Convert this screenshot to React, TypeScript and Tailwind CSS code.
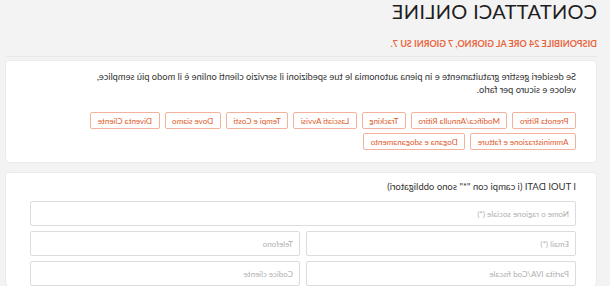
import React from 'react';

const LINKS_ROW = [
  'Prenota Ritiro',
  'Modifica/Annulla Ritiro',
  'Tracking',
  'Lasciati Avvisi',
  'Tempi e Costi',
  'Dove siamo',
  'Diventa Cliente',
  'Amministrazione e fatture',
  'Dogana e sdoganamento',
];

const Field = ({ placeholder }: { placeholder: string }) => (
  <input
    type="text"
    placeholder={placeholder}
    className="h-[25px] w-full rounded-[2px] border border-[#dcdcdc] bg-white px-[6px] text-[8px] text-[#555] outline-none placeholder:text-[#b0b0b0]"
  />
);

export default function App() {
  return (
    // the reference is a mirrored capture, so the whole page is flipped
    <div
      className="h-[286px] w-[610px] -scale-x-100 overflow-hidden bg-[#f3f3f3] text-[#333]"
      style={{ fontFamily: 'Lato, "Open Sans", sans-serif' }}
    >
      <div className="pl-[13px] pr-[5px]">
        <h1 className="pt-[1px] text-[20px] font-normal leading-none tracking-[0.3px] text-[#1e1e1e]">
          CONTATTACI ONLINE
        </h1>
        <p className="mt-[18px] text-[9px] font-bold leading-[9px] text-[#e8663d]">
          DISPONIBILE 24 ORE AL GIORNO, 7 GIORNI SU 7.
        </p>
        <div className="mt-[8px] border-t border-[#e9e9e9]" />

        {/* Servizi */}
        <div className="mt-[3px] rounded-[4px] border border-[#ebebeb] bg-white pl-[20px] pr-[24px] pt-[9px] pb-[12px]">
          <p className="max-w-[500px] text-[9.3px] leading-[13px]">
            Se desideri gestire gratuitamente e in piena autonomia le tue spedizioni il servizio clienti online è il modo più semplice, veloce e sicuro per farlo.
          </p>
          <div className="mt-[16px] flex max-w-[550px] flex-wrap gap-x-[5px] gap-y-[4px]">
            {LINKS_ROW.map((l) => (
              <button
                key={l}
                type="button"
                className="flex h-[17px] items-center rounded-[2px] border border-[#f3b29b] bg-white px-[6.5px] text-[8px] text-[#e05a2b]"
              >
                {l}
              </button>
            ))}
          </div>
        </div>

        {/* Dati */}
        <div className="mt-[9px] rounded-[4px] border border-[#ebebeb] bg-white pl-[20px] pr-[24px] pt-[7px]">
          <p className="text-[9.5px] leading-[13px]">
            I TUOI DATI (i campi con "*" sono obbligatori)
          </p>
          <div className="mt-[8px] flex flex-col gap-[5px]">
            <Field placeholder="Nome o ragione sociale (*)" />
            <div className="grid grid-cols-2 gap-[6px]">
              <Field placeholder="Email (*)" />
              <Field placeholder="Telefono" />
            </div>
            <div className="grid grid-cols-2 gap-[6px]">
              <Field placeholder="Partita IVA/Cod fiscale" />
              <Field placeholder="Codice cliente" />
            </div>
          </div>
        </div>
      </div>
    </div>
  );
}
